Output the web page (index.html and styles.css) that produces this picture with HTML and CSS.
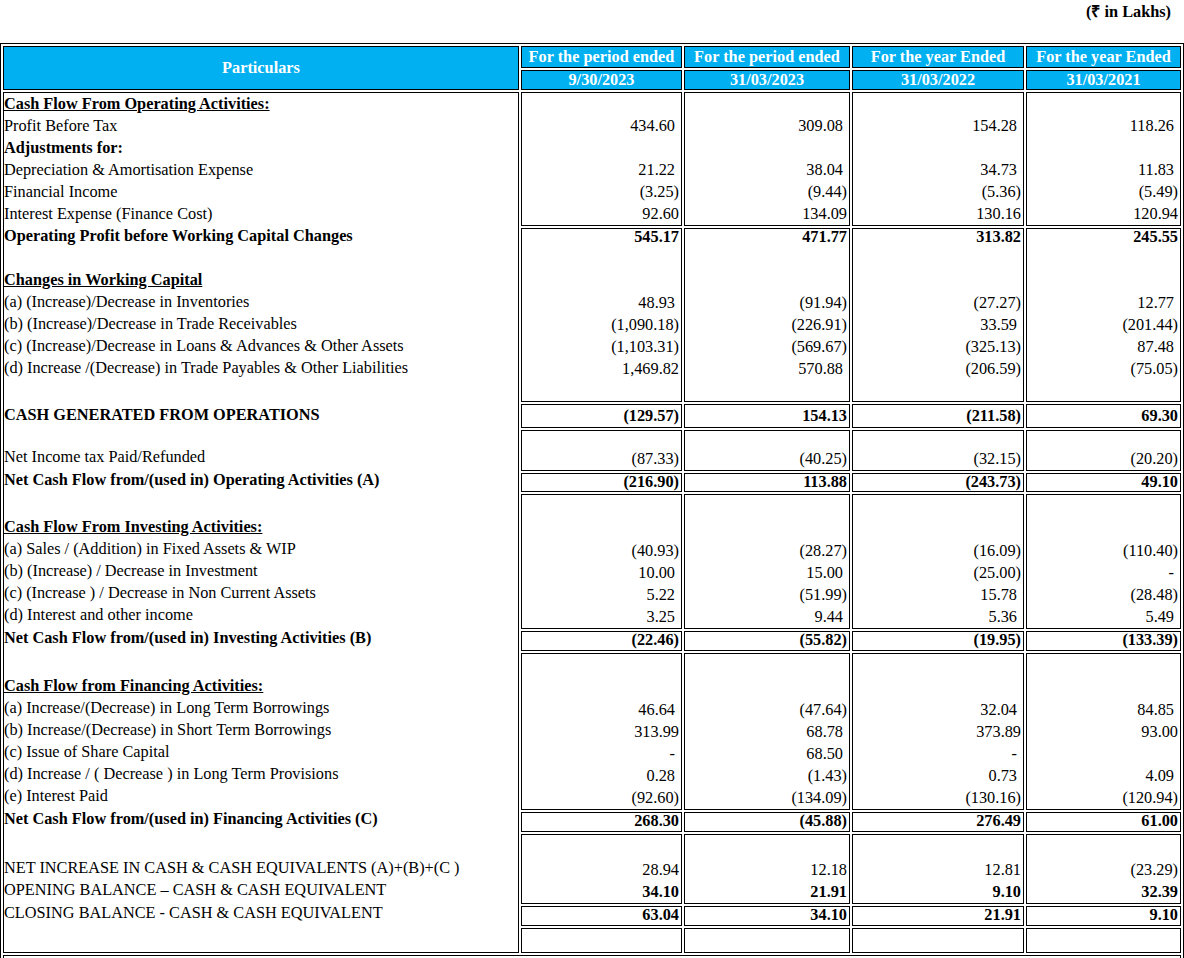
FILE: index.html
```html
<!DOCTYPE html>
<html lang="en">
<head>
    <meta charset="UTF-8">
    <meta name="viewport" content="width=device-width, initial-scale=1.0">
    <title>Cash Flow Statement</title>
    <link rel="stylesheet" href="styles.css">
</head>
<body>
    <div class="unit">(₹ in Lakhs)</div>

    <table class="cf">
        <thead>
            <tr class="hd1">
                <th rowspan="2" class="part">Particulars</th>
                <th class="w1">For the period ended</th>
                <th class="w2">For the period ended</th>
                <th class="w3">For the year Ended</th>
                <th class="w4">For the year Ended</th>
            </tr>
            <tr class="hd2">
                <th>9/30/2023</th>
                <th>31/03/2023</th>
                <th>31/03/2022</th>
                <th>31/03/2021</th>
            </tr>
        </thead>
        <tbody>
            <tr class="r1 top">
                <td rowspan="12" class="labels">
                    <div class="grp g1">
                        <div class="head">Cash Flow From Operating Activities:</div>
                        <div>Profit Before Tax</div>
                        <div class="b">Adjustments for:</div>
                        <div>Depreciation &amp; Amortisation Expense</div>
                        <div>Financial Income</div>
                        <div>Interest Expense (Finance Cost)</div>
                    </div>
                    <div class="grp g2">
                        <div class="b lift">Operating Profit before Working Capital Changes</div>
                        <div>&nbsp;</div>
                        <div class="head">Changes in Working Capital</div>
                        <div>(a) (Increase)/Decrease in Inventories</div>
                        <div>(b) (Increase)/Decrease in Trade Receivables</div>
                        <div>(c) (Increase)/Decrease in Loans &amp; Advances &amp; Other Assets</div>
                        <div>(d) Increase /(Decrease) in Trade Payables &amp; Other Liabilities</div>
                    </div>
                    <div class="grp g3 mid">
                        <div class="b">CASH GENERATED FROM OPERATIONS</div>
                    </div>
                    <div class="grp g4 bot">
                        <div>Net Income tax Paid/Refunded</div>
                    </div>
                    <div class="grp g5 tot">
                        <div class="b">Net Cash Flow from/(used in) Operating Activities (A)</div>
                    </div>
                    <div class="grp g6 bot">
                        <div class="head">Cash Flow From Investing Activities:</div>
                        <div>(a) Sales / (Addition) in Fixed Assets &amp; WIP</div>
                        <div>(b) (Increase) / Decrease in Investment</div>
                        <div>(c) (Increase ) / Decrease in Non Current Assets</div>
                        <div>(d) Interest and other income</div>
                    </div>
                    <div class="grp g7 tot">
                        <div class="b">Net Cash Flow from/(used in) Investing Activities (B)</div>
                    </div>
                    <div class="grp g8 bot">
                        <div class="head">Cash Flow from Financing Activities:</div>
                        <div>(a) Increase/(Decrease) in Long Term Borrowings</div>
                        <div>(b) Increase/(Decrease) in Short Term Borrowings</div>
                        <div>(c) Issue of Share Capital</div>
                        <div>(d) Increase / ( Decrease ) in Long Term Provisions</div>
                        <div>(e) Interest Paid</div>
                    </div>
                    <div class="grp g9 tot">
                        <div class="b">Net Cash Flow from/(used in) Financing Activities (C)</div>
                    </div>
                    <div class="grp g10 bot">
                        <div>NET INCREASE IN CASH &amp; CASH EQUIVALENTS (A)+(B)+(C )</div>
                        <div>OPENING BALANCE – CASH &amp; CASH EQUIVALENT</div>
                    </div>
                    <div class="grp g11 tot">
                        <div>CLOSING BALANCE - CASH &amp; CASH EQUIVALENT</div>
                    </div>
                </td>
                <td class="num"><div>&nbsp;</div><div class="p">434.60</div><div>&nbsp;</div><div class="p">21.22</div><div>(3.25)</div><div>92.60</div></td>
                <td class="num"><div>&nbsp;</div><div class="p">309.08</div><div>&nbsp;</div><div class="p">38.04</div><div>(9.44)</div><div>134.09</div></td>
                <td class="num"><div>&nbsp;</div><div class="p">154.28</div><div>&nbsp;</div><div class="p">34.73</div><div>(5.36)</div><div>130.16</div></td>
                <td class="num"><div>&nbsp;</div><div class="p">118.26</div><div>&nbsp;</div><div class="p">11.83</div><div>(5.49)</div><div>120.94</div></td>
            </tr>
            <tr class="r2 top">
                <td class="num"><div class="b lift">545.17</div><div>&nbsp;</div><div>&nbsp;</div><div class="p">48.93</div><div>(1,090.18)</div><div>(1,103.31)</div><div>1,469.82</div></td>
                <td class="num"><div class="b lift">471.77</div><div>&nbsp;</div><div>&nbsp;</div><div>(91.94)</div><div>(226.91)</div><div>(569.67)</div><div class="p">570.88</div></td>
                <td class="num"><div class="b lift">313.82</div><div>&nbsp;</div><div>&nbsp;</div><div>(27.27)</div><div class="p">33.59</div><div>(325.13)</div><div>(206.59)</div></td>
                <td class="num"><div class="b lift">245.55</div><div>&nbsp;</div><div>&nbsp;</div><div class="p">12.77</div><div>(201.44)</div><div class="p">87.48</div><div>(75.05)</div></td>
            </tr>
            <tr class="r3 mid">
                <td class="num b">(129.57)</td>
                <td class="num b">154.13</td>
                <td class="num b">(211.58)</td>
                <td class="num b">69.30</td>
            </tr>
            <tr class="r4 bot">
                <td class="num">(87.33)</td>
                <td class="num">(40.25)</td>
                <td class="num">(32.15)</td>
                <td class="num">(20.20)</td>
            </tr>
            <tr class="r5 tot">
                <td class="num b">(216.90)</td>
                <td class="num b">113.88</td>
                <td class="num b">(243.73)</td>
                <td class="num b">49.10</td>
            </tr>
            <tr class="r6 bot">
                <td class="num"><div>(40.93)</div><div class="p">10.00</div><div class="p">5.22</div><div class="p">3.25</div></td>
                <td class="num"><div>(28.27)</div><div class="p">15.00</div><div>(51.99)</div><div class="p">9.44</div></td>
                <td class="num"><div>(16.09)</div><div>(25.00)</div><div class="p">15.78</div><div class="p">5.36</div></td>
                <td class="num"><div>(110.40)</div><div class="p">-</div><div>(28.48)</div><div class="p">5.49</div></td>
            </tr>
            <tr class="r7 tot">
                <td class="num b">(22.46)</td>
                <td class="num b">(55.82)</td>
                <td class="num b">(19.95)</td>
                <td class="num b">(133.39)</td>
            </tr>
            <tr class="r8 bot">
                <td class="num"><div class="p">46.64</div><div>313.99</div><div class="p">-</div><div class="p">0.28</div><div>(92.60)</div></td>
                <td class="num"><div>(47.64)</div><div class="p">68.78</div><div class="p">68.50</div><div>(1.43)</div><div>(134.09)</div></td>
                <td class="num"><div class="p">32.04</div><div>373.89</div><div class="p">-</div><div class="p">0.73</div><div>(130.16)</div></td>
                <td class="num"><div class="p">84.85</div><div>93.00</div><div>&nbsp;</div><div class="p">4.09</div><div>(120.94)</div></td>
            </tr>
            <tr class="r9 tot">
                <td class="num b">268.30</td>
                <td class="num b">(45.88)</td>
                <td class="num b">276.49</td>
                <td class="num b">61.00</td>
            </tr>
            <tr class="r10 bot">
                <td class="num"><div>28.94</div><div class="b">34.10</div></td>
                <td class="num"><div>12.18</div><div class="b">21.91</div></td>
                <td class="num"><div>12.81</div><div class="b">9.10</div></td>
                <td class="num"><div>(23.29)</div><div class="b">32.39</div></td>
            </tr>
            <tr class="r11 tot">
                <td class="num b">63.04</td>
                <td class="num b">34.10</td>
                <td class="num b">21.91</td>
                <td class="num b">9.10</td>
            </tr>
            <tr class="r12">
                <td class="num"></td>
                <td class="num"></td>
                <td class="num"></td>
                <td class="num"></td>
            </tr>
            <tr class="foot">
                <td colspan="5"></td>
            </tr>
        </tbody>
    </table>
</body>
</html>
```

FILE: styles.css
```css
body{
    margin: 0;
    font-family: "Liberation Serif", "Times New Roman", serif;
    font-size: 16.3px;
    color: #000;
    background-color: #fff;
}

.unit{
    height: 43px;
    box-sizing: border-box;
    padding: 1px 13px 0 0;
    line-height: 22px;
    text-align: right;
    font-weight: bold;
}

.cf{
    width: 1184px;
    table-layout: fixed;
    border: 1px solid #000;
    border-spacing: 2px;
}

.cf th,
.cf td{
    border: 1px solid #000;
    padding: 0;
}

.cf th{
    box-sizing: border-box;
    background-color: #00b0f0;
    color: #fff;
    font-weight: bold;
    text-align: center;
    white-space: nowrap;
}

.hd1 th{ line-height: 20px; }
.hd2 th{ line-height: 18px; }

.part{ width: 516px; vertical-align: middle; }
.w1{ width: 161px; }
.w2{ width: 166px; }
.w3{ width: 172px; }
.w4{ width: 155px; }

/* left column: one tall cell, groups line up with the number rows */
.labels{
    vertical-align: top;
    padding: 0 1px;
    white-space: nowrap;
}

.grp{
    display: flex;
    flex-direction: column;
    margin-bottom: 4px;
    line-height: 22px;
}

.grp.mid{ justify-content: center; }
.grp.bot{ justify-content: flex-end; }

.head{
    font-weight: bold;
    text-decoration: underline;
}

.b{ font-weight: bold; }

.lift{ margin-top: -3px; }

.num{
    text-align: right;
    padding-right: 2px !important;
    line-height: 22px;
    white-space: nowrap;
}

.num .p{ padding-right: 4px; }

.top .num{ vertical-align: top; }
.mid .num{ vertical-align: middle; }
.bot .num{ vertical-align: bottom; }

.tot .num,
.grp.tot{
    vertical-align: top;
    line-height: 15px;
}

.r1 .num, .g1{ height: 131px; }
.r2 .num, .g2{ height: 172px; }
.r3 .num, .g3{ height: 21px; }
.r4 .num, .g4{ height: 39px; }
.r5 .num, .g5{ height: 17px; }
.r6 .num, .g6{ height: 133px; }
.r7 .num, .g7{ height: 18px; }
.r8 .num, .g8{ height: 155px; }
.r9 .num, .g9{ height: 18px; }
.r10 .num, .g10{ height: 68px; }
.r11 .num, .g11{ height: 18px; }
.r12 .num{ height: 23px; }

.foot td{ height: 40px; }
```
